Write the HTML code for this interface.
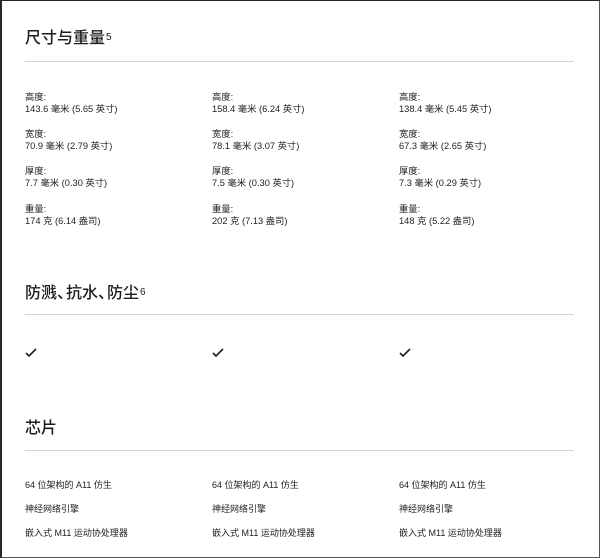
<!DOCTYPE html>
<html><head><meta charset="utf-8"><style>
*{margin:0;padding:0;box-sizing:border-box}
html,body{width:600px;height:558px;overflow:hidden;background:#fff}
body{position:relative;font-family:"Liberation Sans","Noto Sans CJK SC",sans-serif;color:#1d1d1f;border-top:1px solid #2a2520;border-left:2px solid #2a2520;border-right:1px solid #555;border-bottom:1px solid #555}
.a{position:absolute;white-space:nowrap}
h2{position:absolute;left:23px;font-size:16px;font-weight:500;line-height:20px;white-space:nowrap}
h2 sup{font-size:10px;vertical-align:top;position:relative;top:-1px;margin-left:1px}
h2 .c{display:inline-block;width:9px;overflow:visible}
.r{position:absolute;left:23px;width:549px;height:1px;background:#d6d6d6}
.t{font-size:9.3px;line-height:12px;color:#222}
.u{font-size:9px;line-height:11px;color:#222}
</style></head><body>
<h2 style="top:28px">尺寸与重量<sup>5</sup></h2>
<div class="r" style="top:60px"></div>

<div class="a t" style="left:23px;top:90px">高度:<br>143.6 毫米 (5.65 英寸)</div>
<div class="a t" style="left:210px;top:90px">高度:<br>158.4 毫米 (6.24 英寸)</div>
<div class="a t" style="left:397px;top:90px">高度:<br>138.4 毫米 (5.45 英寸)</div>

<div class="a t" style="left:23px;top:127px">宽度:<br>70.9 毫米 (2.79 英寸)</div>
<div class="a t" style="left:210px;top:127px">宽度:<br>78.1 毫米 (3.07 英寸)</div>
<div class="a t" style="left:397px;top:127px">宽度:<br>67.3 毫米 (2.65 英寸)</div>

<div class="a t" style="left:23px;top:164px">厚度:<br>7.7 毫米 (0.30 英寸)</div>
<div class="a t" style="left:210px;top:164px">厚度:<br>7.5 毫米 (0.30 英寸)</div>
<div class="a t" style="left:397px;top:164px">厚度:<br>7.3 毫米 (0.29 英寸)</div>

<div class="a t" style="left:23px;top:202px">重量:<br>174 克 (6.14 盎司)</div>
<div class="a t" style="left:210px;top:202px">重量:<br>202 克 (7.13 盎司)</div>
<div class="a t" style="left:397px;top:202px">重量:<br>148 克 (5.22 盎司)</div>

<h2 style="top:283px">防溅<span class="c">、</span>抗水<span class="c">、</span>防尘<sup>6</sup></h2>
<div class="r" style="top:313px"></div>
<svg class="a" style="left:23px;top:347px" width="12" height="10" viewBox="0 0 12 10"><path d="M1 5l3 3 7-7" fill="none" stroke="#1d1d1f" stroke-width="1.6"/></svg>
<svg class="a" style="left:210px;top:347px" width="12" height="10" viewBox="0 0 12 10"><path d="M1 5l3 3 7-7" fill="none" stroke="#1d1d1f" stroke-width="1.6"/></svg>
<svg class="a" style="left:397px;top:347px" width="12" height="10" viewBox="0 0 12 10"><path d="M1 5l3 3 7-7" fill="none" stroke="#1d1d1f" stroke-width="1.6"/></svg>

<h2 style="top:418px">芯片</h2>
<div class="r" style="top:449px"></div>
<div class="a u" style="left:23px;top:479px">64 位架构的 A11 仿生</div>
<div class="a u" style="left:210px;top:479px">64 位架构的 A11 仿生</div>
<div class="a u" style="left:397px;top:479px">64 位架构的 A11 仿生</div>
<div class="a u" style="left:23px;top:503px">神经网络引擎</div>
<div class="a u" style="left:210px;top:503px">神经网络引擎</div>
<div class="a u" style="left:397px;top:503px">神经网络引擎</div>
<div class="a u" style="left:23px;top:527px">嵌入式 M11 运动协处理器</div>
<div class="a u" style="left:210px;top:527px">嵌入式 M11 运动协处理器</div>
<div class="a u" style="left:397px;top:527px">嵌入式 M11 运动协处理器</div>
</body></html>
